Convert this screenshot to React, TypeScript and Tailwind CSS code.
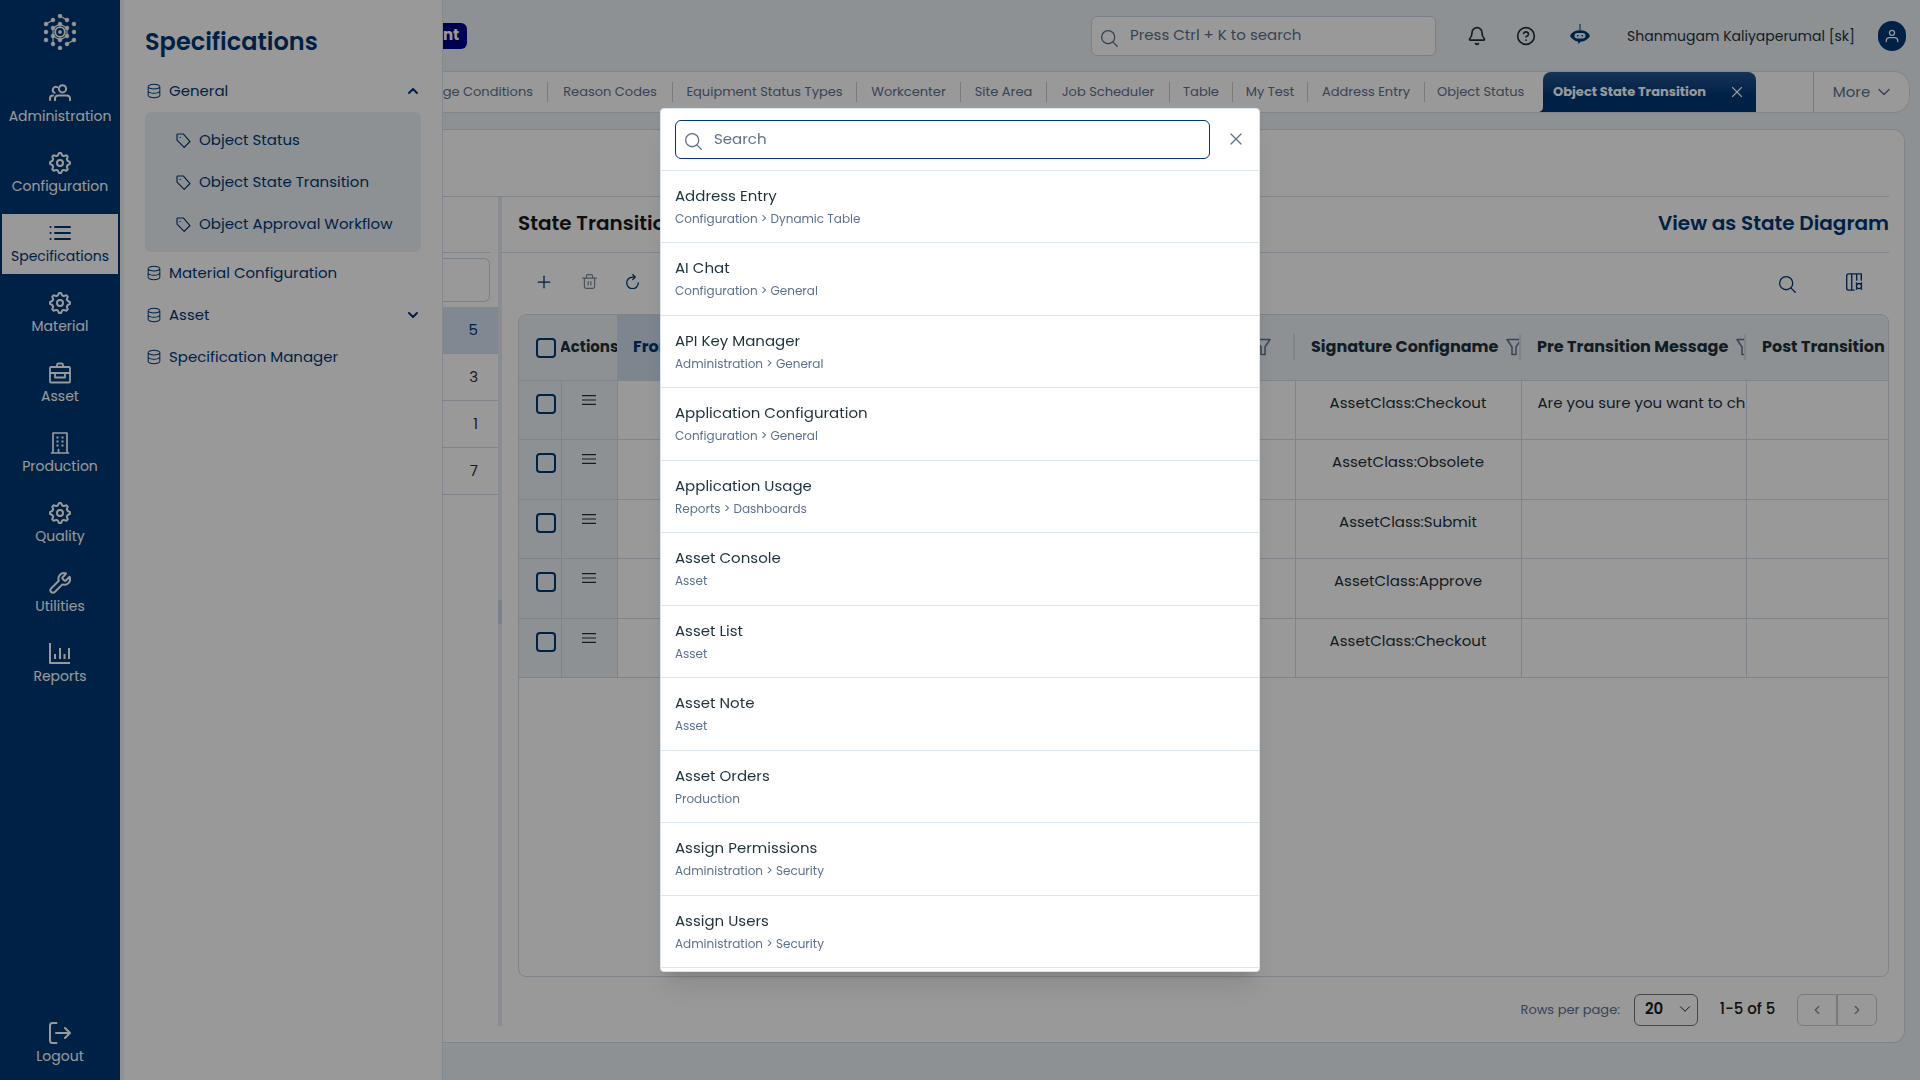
import type { ComponentType, ReactNode } from 'react';
import { Bell, ChevronDown, ChevronLeft, ChevronRight, ChevronUp, CircleQuestionMark, Plus, X } from 'lucide-react';
import { GoDatabase } from 'react-icons/go';

interface IconProps {
  className?: string;
}

interface StrokeIconProps extends IconProps {
  children: ReactNode;
  strokeWidth?: number;
}

const StrokeIcon = ({ className, children, strokeWidth = 2 }: StrokeIconProps) => (
  <svg
    viewBox="0 0 22 22"
    fill="none"
    stroke="currentColor"
    strokeWidth={strokeWidth}
    strokeLinecap="round"
    strokeLinejoin="round"
    className={className}
    aria-hidden="true"
  >
    {children}
  </svg>
);

const UsersIcon = ({ className }: IconProps) => (
  <StrokeIcon className={className}>
    <circle cx="13.5" cy="6.8" r="3.6" />
    <path d="M6 18.2v-1.4c0-2 1.6-3.4 3.6-3.4h7.8c2 0 3.6 1.4 3.6 3.4v1.4M8.2 5.2A3 3 0 0 0 5.6 10.8M1 18v-1.6c0-1.7 1.2-3 3-3" />
  </StrokeIcon>
);

// Outline of an eight-tooth gear: two outer points, then two inner ones
const gearPath = Array.from({ length: 32 }, (_, i) => {
  const angle = ((i - 0.5) * Math.PI) / 16;
  const radius = i % 4 < 2 ? 10 : 7.8;
  return `${i ? 'L' : 'M'}${(11 + radius * Math.cos(angle)).toFixed(2)} ${(11 + radius * Math.sin(angle)).toFixed(2)}`;
}).join('');

const GearIcon = ({ className }: IconProps) => (
  <StrokeIcon className={className}>
    <path d={`${gearPath}Z`} />
    <circle cx="11" cy="11" r="3" />
  </StrokeIcon>
);

const ListIcon = ({ className }: IconProps) => (
  <StrokeIcon className={className}>
    <path d="M6 5h15M6 11h15M6 17h15M1.5 5h.1M1.5 11h.1M1.5 17h.1" />
  </StrokeIcon>
);

const BriefcaseIcon = ({ className }: IconProps) => (
  <StrokeIcon className={className} strokeWidth={1.8}>
    <rect x="1" y="5" width="20" height="15.5" rx="1" />
    <path d="M8 5V3c0-1 .5-1.500 1.500-1.500h3c1 0 1.500.5 1.500 1.500v2M1 11h20M6 11.500v4h10v-4" />
  </StrokeIcon>
);

const BuildingIcon = ({ className }: IconProps) => (
  <StrokeIcon className={className} strokeWidth={1.7}>
    <path d="M4 21V1h14v20M2.500 21h17M9.500 21v-3.500" />
    <path d="M7.500 5.500h2M12.500 5.500h2M7.500 9.500h2M12.500 9.500h2M7.500 13.500h2M12.500 13.500h2" strokeWidth="2.200" strokeLinecap="butt" />
  </StrokeIcon>
);

const WrenchIcon = ({ className }: IconProps) => (
  <StrokeIcon className={className}>
    <path d="M13.700 5.300a1 1 0 0 0 0 1.600l1.600 1.600a1 1 0 0 0 1.600 0l3.700-3.700c.9 2.300.5 4.700-1.100 6.300-1.700 1.700-4 2.100-6.100 1.300l-7.600 7.600a2.300 2.300 0 0 1-3.600-3.600l7.600-7.600c-.8-2.100-.4-4.400 1.300-6.100C12.700 1.100 15 .7 17 1.500z" />
  </StrokeIcon>
);

const ReportsIcon = ({ className }: IconProps) => (
  <StrokeIcon className={className}>
    <path d="M1 1v20h20M6 12v5M11 6v11M15.5 12v5M20 6v11" strokeLinecap="butt" />
  </StrokeIcon>
);

const LogoutIcon = ({ className }: IconProps) => (
  <StrokeIcon className={className}>
    <path d="M7.5 1H3.5C2 1 1 2 1 3.5v15C1 20 2 21 3.5 21h4M7 11h14M16 6l5 5-5 5" />
  </StrokeIcon>
);

const TagIcon = ({ className }: IconProps) => (
  <StrokeIcon className={className} strokeWidth={1.7}>
    <path d="M1.500 2.500v8L12 21l8.500-8.500L11 1.500H2.500a1 1 0 0 0-1 1zM6 6.500h.2" />
  </StrokeIcon>
);

const SearchIcon = ({ className }: IconProps) => (
  <StrokeIcon className={className} strokeWidth={1.6}>
    <circle cx="10" cy="10" r="8" />
    <path d="m16 16 5 5" />
  </StrokeIcon>
);

const TrashIcon = ({ className }: IconProps) => (
  <StrokeIcon className={className} strokeWidth={1.7}>
    <path d="M1 6h20M3.500 6v12.500c0 1.500 1 2.500 2.500 2.500h10c1.500 0 2.500-1 2.500-2.500V6M6.500 6V3c0-1 .6-2 2-2h5c1.400 0 2 1 2 2v3M9 11v5M13 11v5" />
  </StrokeIcon>
);

const RefreshIcon = ({ className }: IconProps) => (
  <StrokeIcon className={className} strokeWidth={1.9}>
    <path d="M19.500 13A8.500 8.500 0 1 1 11 4.500h4M11.500 1l3.500 3.500L11.500 8" />
  </StrokeIcon>
);

const ColumnsIcon = ({ className }: IconProps) => (
  <StrokeIcon className={className} strokeWidth={1.5}>
    <path d="M11 20H5c-1.500 0-2-1-2-2V4c0-1 .5-2 2-2h14v7M8.500 2v18M14 2v7" />
    <circle cx="16.500" cy="15.500" r="2.800" />
    <path d="M14.500 13l-1-1M18.500 13l1-1M14.500 18l-1 1M18.500 18l1 1" />
  </StrokeIcon>
);

const FilterIcon = ({ className }: IconProps) => (
  <svg viewBox="0 0 16 18" fill="none" stroke="currentColor" strokeWidth="1.5" strokeLinejoin="round" className={className} aria-hidden="true">
    <path d="M1 1.500h14L10 9v7.500H6V9z" />
  </svg>
);

const MenuIcon = ({ className }: IconProps) => (
  <svg viewBox="0 0 14 10" fill="none" stroke="currentColor" strokeWidth="1.2" className={className} aria-hidden="true">
    <path d="M0 .6h14M0 5h14M0 9.400h14" />
  </svg>
);

const UserIcon = ({ className }: IconProps) => (
  <StrokeIcon className={className}>
    <circle cx="11" cy="6" r="4" />
    <path d="M2 20v-2c0-3 2-4.500 5-4.500h8c3 0 5 1.500 5 4.500v2" />
  </StrokeIcon>
);

const RobotIcon = ({ className }: IconProps) => (
  <svg viewBox="0 0 20 20" className={className} aria-hidden="true">
    <path fill="currentColor" d="M9.500 0h1v6h-1zM4 7.500Q10 5 16 7.500L18.500 9.500Q21 12 18.500 14L16 16q-2 1.500-5.500 1.700L8.500 20l-.5-2.400Q5 17.300 4 16L1.500 14Q-1 12 1.500 9.500z" />
    <rect x="4.500" y="9" width="11" height="5.500" rx="2.700" fill="#ebf2f7" />
    <path fill="currentColor" d="M7 11h1.500v1.500H7zM11.500 11H13v1.500h-1.500z" />
  </svg>
);

// Hexagonal lattice of dots around a ring
const logoDots: [number, number][] = [
  [17, 2], [10, 6], [24, 6], [3, 10], [31, 10], [10, 14], [17, 10], [24, 14], [3, 18], [31, 18],
  [10, 22], [24, 22], [17, 26], [3, 26], [31, 26], [10, 30], [24, 30], [17, 34],
];

const Logo = () => (
  <svg viewBox="0 0 34 36" className="h-9 w-[34px]" fill="currentColor" stroke="currentColor" strokeWidth="0.6" aria-label="Home" role="img">
    {logoDots.map(([x, y]) => (
      <circle key={`${x}-${y}`} cx={x} cy={y} r="1.9" />
    ))}
    <circle cx="17" cy="18" r="4.8" fill="none" strokeWidth="1.8" />
    <circle cx="17" cy="18" r="1.6" />
    <path
      fill="none"
      strokeWidth="1.2"
      d="M3 10l7-4M17 2l7 4M10 14l7-4 7 4v8l-7 4-7-4zM31 26l-7 4M10 22v8"
    />
  </svg>
);

interface NavItem {
  label: string;
  icon: ComponentType<IconProps>;
  active?: boolean;
}

const navItems: NavItem[] = [
  { label: 'Administration', icon: UsersIcon },
  { label: 'Configuration', icon: GearIcon },
  { label: 'Specifications', icon: ListIcon, active: true },
  { label: 'Material', icon: GearIcon },
  { label: 'Asset', icon: BriefcaseIcon },
  { label: 'Production', icon: BuildingIcon },
  { label: 'Quality', icon: GearIcon },
  { label: 'Utilities', icon: WrenchIcon },
  { label: 'Reports', icon: ReportsIcon },
];

const NavLink = ({ label, icon: Icon, active }: NavItem) => (
  <a
    href="#"
    className={`mx-0.5 flex h-15 flex-col items-center gap-0.5 pt-2 text-sm leading-5 ${active ? 'bg-white text-[#003776]' : 'text-white'}`}
  >
    <Icon className="size-[22px]" />
    {label}
  </a>
);

const Sidebar = () => (
  <nav className="flex w-30 shrink-0 flex-col bg-[#003776] pb-1.5 text-white">
    <div className="flex h-[74px] justify-center pt-3.5">
      <Logo />
    </div>
    <div className="flex flex-1 flex-col gap-2.5">
      {navItems.map((item) => (
        <NavLink key={item.label} {...item} />
      ))}
    </div>
    <NavLink label="Logout" icon={LogoutIcon} />
  </nav>
);

interface MenuRowProps {
  label: string;
  chevron?: ComponentType<IconProps & { strokeWidth?: number }>;
}

const MenuRow = ({ label, chevron: Chevron }: MenuRowProps) => (
  <button className="flex h-[42px] w-full items-center text-left">
    <GoDatabase className="ml-px size-4" />
    <span className="ml-[7px] flex-1">{label}</span>
    {Chevron && <Chevron className="size-4" strokeWidth={3} />}
  </button>
);

const Flyout = () => (
  <aside className="ml-1 w-[319px] shrink-0 border-r border-[#dce5ee] bg-white pl-[21px] pr-[21px] text-[15px] text-[#003776]">
    <h2 className="flex h-[70px] items-center pt-3.5 text-2xl font-semibold">Specifications</h2>
    <MenuRow label="General" chevron={ChevronUp} />
    <div className="rounded-md bg-[#ebf2f7] py-[7px] pl-[31px]">
      {['Object Status', 'Object State Transition', 'Object Approval Workflow'].map((label) => (
        <a key={label} href="#" className="flex h-[42px] items-center gap-2">
          <TagIcon className="size-[15px]" />
          {label}
        </a>
      ))}
    </div>
    <MenuRow label="Material Configuration" />
    <MenuRow label="Asset" chevron={ChevronDown} />
    <MenuRow label="Specification Manager" />
  </aside>
);

const Header = () => (
  <header className="flex h-[71px] shrink-0 items-center pr-3.5 text-[#1f313b]">
    <span className="flex h-[26px] items-center rounded-r-md bg-[#00008b] pr-2 text-[15px] font-bold text-white">nt</span>
    <label className="ml-auto flex h-10 w-[345px] items-center gap-3 rounded-md border border-[#ccd8e4] bg-white px-2 text-[#5d708f]">
      <SearchIcon className="mt-1 size-[18px] shrink-0" />
      <input
        aria-label="Global search"
        placeholder="Press Ctrl + K to search"
        className="w-full bg-transparent text-[15px] outline-none placeholder:text-[#5d708f]"
      />
    </label>
    <button aria-label="Notifications" className="ml-[31px]">
      <Bell className="size-5" />
    </button>
    <button aria-label="Help" className="ml-[29px]">
      <CircleQuestionMark className="size-5" />
    </button>
    <button aria-label="Assistant" className="ml-[34px] pb-1 text-[#003776]">
      <RobotIcon className="size-5" />
    </button>
    <div className="flex w-[288px] shrink-0 justify-end whitespace-nowrap pr-[23px] text-sm">Shanmugam Kaliyaperumal [sk]</div>
    <button aria-label="Profile" className="flex h-[30px] w-7 shrink-0 items-center justify-center rounded-full bg-[#003776] text-white">
      <UserIcon className="size-3.5" />
    </button>
  </header>
);

const tabs = [
  { label: 'ge Conditions', width: 'w-[105px] pr-3.5 justify-end' },
  { label: 'Reason Codes', width: 'w-[125px] justify-center' },
  { label: 'Equipment Status Types', width: 'w-[184px] justify-center' },
  { label: 'Workcenter', width: 'w-[104px] justify-center' },
  { label: 'Site Area', width: 'w-[86px] justify-center' },
  { label: 'Job Scheduler', width: 'w-[123px] justify-center' },
  { label: 'Table', width: 'w-[63px] justify-center' },
  { label: 'My Test', width: 'w-[75px] justify-center' },
  { label: 'Address Entry', width: 'w-[117px] justify-center' },
];

const TabBar = () => (
  <div className="mr-2.5 flex h-[42px] shrink-0 items-center rounded-r-2xl border border-l-0 border-[#dcdcdc] bg-white text-[13px] text-[#5d708f]">
    {tabs.map(({ label, width }) => (
      <button key={label} className={`flex h-5 items-center whitespace-nowrap border-r border-[#ccc] ${width}`}>
        {label}
      </button>
    ))}
    <button className="w-[118px] pl-3 text-left">Object Status</button>
    <div className="relative flex h-full w-[213px] items-center justify-between rounded-t-lg bg-linear-to-b from-[#26568f] to-[#003776] to-60% pl-2.5 pr-2.5 text-white">
      <svg viewBox="0 0 4 5" className="absolute -left-1 bottom-0 h-[5px] w-1 text-[#003776]" aria-hidden="true">
        <path fill="currentColor" d="M4 0v5H0Q4 4 4 0z" />
      </svg>
      <button className="font-bold">Object State Transition</button>
      <button aria-label="Close tab">
        <X className="size-[18px]" strokeWidth={1.5} />
      </button>
    </div>
    <button className="ml-auto flex h-full w-24 items-center justify-center gap-1 border-l border-[#ccc] pl-1 text-[15px]">
      More
      <ChevronDown className="size-5" strokeWidth={1.7} />
    </button>
  </div>
);

const ListPane = () => (
  <section className="flex w-[55px] shrink-0 flex-col">
    <div className="mr-2 h-14 border-b border-[#d3dce6]" />
    <input aria-label="Filter list" className="mb-[5px] mr-2 mt-[5px] h-11 rounded-r-md border border-l-0 border-[#ccd8e4] bg-white px-2" />
    <ul className="text-right text-[15px] text-[#1f313b]">
      {[5, 3, 1, 7].map((count) => (
        <li
          key={count}
          className={`flex h-[47px] items-center justify-end border-b border-[#d3dce6] pr-5 ${count === 5 ? 'bg-[#d5e3f4] text-[#003776]' : ''}`}
        >
          {count}
        </li>
      ))}
    </ul>
  </section>
);

const rows = [
  { id: 1, config: 'AssetClass:Checkout', pre: 'Are you sure you want to ch' },
  { id: 2, config: 'AssetClass:Obsolete', pre: '' },
  { id: 3, config: 'AssetClass:Submit', pre: '' },
  { id: 4, config: 'AssetClass:Approve', pre: '' },
  { id: 5, config: 'AssetClass:Checkout', pre: '' },
];

const checkboxClass = 'block size-5 appearance-none rounded-sm border-2 border-[#003776]';
const cellClass = 'overflow-hidden whitespace-nowrap border-r border-[#d3dce6] pt-[11px]';
const headerCellClass = 'flex h-[26px] items-center gap-2 overflow-hidden whitespace-nowrap border-r-2 border-[#d3dce6] pl-4';

const TransitionTable = () => (
  <table className="w-full table-fixed border-collapse text-[15px] text-[#1f313b]">
    <colgroup>
      <col className="w-[42px]" />
      <col className="w-14" />
      <col className="w-[226px]" />
      <col className="w-[226px]" />
      <col className="w-[226px]" />
      <col className="w-[226px]" />
      <col className="w-[225px]" />
      <col />
    </colgroup>
    <thead>
      <tr className="h-[65px] border-b border-[#d3dce6] bg-[#ebf2f7] text-left text-base font-bold">
        <th className="pl-[17px] pt-0.5">
          <input type="checkbox" aria-label="Select all rows" className={checkboxClass} />
        </th>
        <th>
          <div className="flex justify-center overflow-hidden text-[15px]">Actions</div>
        </th>
        <th className="bg-[#d0dfef] pl-4 text-[#003776]">From</th>
        <th />
        <th>
          <div className="flex h-[26px] items-center justify-end border-r-2 border-[#d3dce6] pr-[22px]">
            <FilterIcon className="h-[18px] w-4 text-[#5d708f]" />
          </div>
        </th>
        <th>
          <div className={headerCellClass}>
            Signature Configname
            <FilterIcon className="h-[18px] w-4 shrink-0 text-[#5d708f]" />
          </div>
        </th>
        <th>
          <div className={headerCellClass}>
            Pre Transition Message
            <FilterIcon className="h-[18px] w-4 shrink-0 text-[#5d708f]" />
          </div>
        </th>
        <th className="overflow-hidden whitespace-nowrap pl-4">Post Transition</th>
      </tr>
    </thead>
    <tbody>
      {rows.map(({ id, config, pre }) => (
        <tr key={id} className="h-[59px] border-b border-[#d3dce6] align-top even:h-15">
          <td className="border-r border-[#d3dce6] bg-[#ebf2f7] pl-[17px] pt-[13px]">
            <input type="checkbox" aria-label={`Select row ${id}`} className={checkboxClass} />
          </td>
          <td className="border-r border-[#d3dce6] bg-[#ebf2f7] pt-3.5">
            <button aria-label="Row actions" className="mx-auto block">
              <MenuIcon className="h-2.5 w-3.5" />
            </button>
          </td>
          <td className={cellClass} />
          <td className={cellClass} />
          <td className={cellClass} />
          <td className={`${cellClass} text-center`}>{config}</td>
          <td className={`${cellClass} pl-4`}>{pre}</td>
          <td />
        </tr>
      ))}
    </tbody>
  </table>
);

const Pagination = () => (
  <div className="flex h-[65px] items-center justify-end pr-3 text-[#1a1a1a]">
    <label htmlFor="page-size" className="mr-3.5 text-[13px] text-[#5d708f]">
      Rows per page:
    </label>
    <div className="relative">
      <select id="page-size" className="block h-8 w-16 appearance-none rounded-md border border-[#777] bg-white pl-2.5 text-[15px] font-semibold">
        <option>20</option>
      </select>
      <ChevronDown className="pointer-events-none absolute right-1 top-1.5 size-[18px]" strokeWidth={1.3} />
    </div>
    <span className="w-[99px] text-center text-[15px] font-medium">1-5 of 5</span>
    <div className="flex text-[#888]">
      <button aria-label="Previous page" className="flex h-8 w-10 items-center justify-center rounded-l-md border border-[#ccc]">
        <ChevronLeft className="size-3.5" />
      </button>
      <button aria-label="Next page" className="flex h-8 w-10 items-center justify-center rounded-r-md border border-[#ccc]">
        <ChevronRight className="size-3.5" />
      </button>
    </div>
  </div>
);

const TransitionPane = () => (
  <section className="flex min-w-0 flex-1 flex-col">
    <div className="flex h-14 items-center justify-between border-b border-[#d3dce6] pb-[3px] pl-4 text-xl font-semibold text-[#1a1a1a]">
      <h1>State Transition</h1>
      <a href="#" className="text-[#003776]">View as State Diagram</a>
    </div>
    <div className="flex h-[61px] items-center pb-1 pl-8 pr-[25px] text-[#003776]">
      <button aria-label="Add">
        <Plus className="size-5" strokeWidth={1.5} />
      </button>
      <button aria-label="Delete" disabled className="ml-7 text-[#7b8698]">
        <TrashIcon className="size-[15px]" />
      </button>
      <button aria-label="Refresh" className="ml-7">
        <RefreshIcon className="size-[15px]" />
      </button>
      <button aria-label="Search table" className="ml-auto pt-1">
        <SearchIcon className="size-[18px]" />
      </button>
      <button aria-label="Column settings" className="ml-12">
        <ColumnsIcon className="size-5" />
      </button>
    </div>
    <div className="ml-4 flex-1 overflow-hidden rounded-lg border border-[#d3dce6]">
      <TransitionTable />
    </div>
    <Pagination />
  </section>
);

const entries = [
  ['Address Entry', 'Configuration > Dynamic Table'],
  ['AI Chat', 'Configuration > General'],
  ['API Key Manager', 'Administration > General'],
  ['Application Configuration', 'Configuration > General'],
  ['Application Usage', 'Reports > Dashboards'],
  ['Asset Console', 'Asset'],
  ['Asset List', 'Asset'],
  ['Asset Note', 'Asset'],
  ['Asset Orders', 'Production'],
  ['Assign Permissions', 'Administration > Security'],
  ['Assign Users', 'Administration > Security'],
];

const SearchDialog = () => (
  <div className="fixed inset-0 flex items-center justify-center bg-black/40">
    <div
      role="dialog"
      aria-label="Search"
      className="flex h-[80vh] w-[600px] flex-col overflow-hidden rounded-sm border border-[#dce6ef] bg-white shadow-xl"
    >
      <div className="flex h-[62px] shrink-0 items-center border-b border-[#dce6ef] pl-3.5 pr-[13px]">
        <label className="flex h-[39px] flex-1 items-center gap-3 rounded-md border border-[#003776] px-2 text-[#5d708f]">
          <SearchIcon className="mt-0.5 size-[18px] shrink-0" />
          <input
            aria-label="Search menu"
            placeholder="Search"
            className="w-full bg-transparent text-[15px] outline-none placeholder:text-[#5d708f]"
          />
        </label>
        <button aria-label="Close" className="ml-4 pb-0.5 text-[#5d708f]">
          <X className="size-5" strokeWidth={1.5} />
        </button>
      </div>
      <ul className="flex-1 overflow-hidden">
        {entries.map(([title, path]) => (
          <li key={title} className="h-18 border-b border-[#dce6ef] px-3.5 pt-[13px] even:h-[73px]">
            <a href="#" className="block">
              <span className="block text-[15px] leading-6 text-[#1f313b]">{title}</span>
              <span className="block text-xs leading-[22px] text-[#5d708f]">{path}</span>
            </a>
          </li>
        ))}
      </ul>
    </div>
  </div>
);

const App = () => (
  <div className="flex h-screen overflow-hidden bg-[#ebf2f7] font-['Poppins','Inter',sans-serif]">
    <Sidebar />
    <Flyout />
    <main className="flex min-w-0 flex-1 flex-col">
      <Header />
      <TabBar />
      <div className="mb-[37px] mr-[15px] mt-4 flex min-h-0 flex-1 flex-col rounded-r-xl border border-l-0 border-[#d3dce6] bg-white pr-[15px]">
        <div className="h-[67px] shrink-0 border-b border-[#d3dce6]" />
        <div className="flex min-h-0 flex-1">
          <ListPane />
          <div className="mb-4 flex w-1 shrink-0 items-center bg-[#e4ebf3]">
            <div className="h-6 w-1 bg-[#c9d8ea]" />
          </div>
          <TransitionPane />
        </div>
      </div>
    </main>
    <SearchDialog />
  </div>
);

export default App;
